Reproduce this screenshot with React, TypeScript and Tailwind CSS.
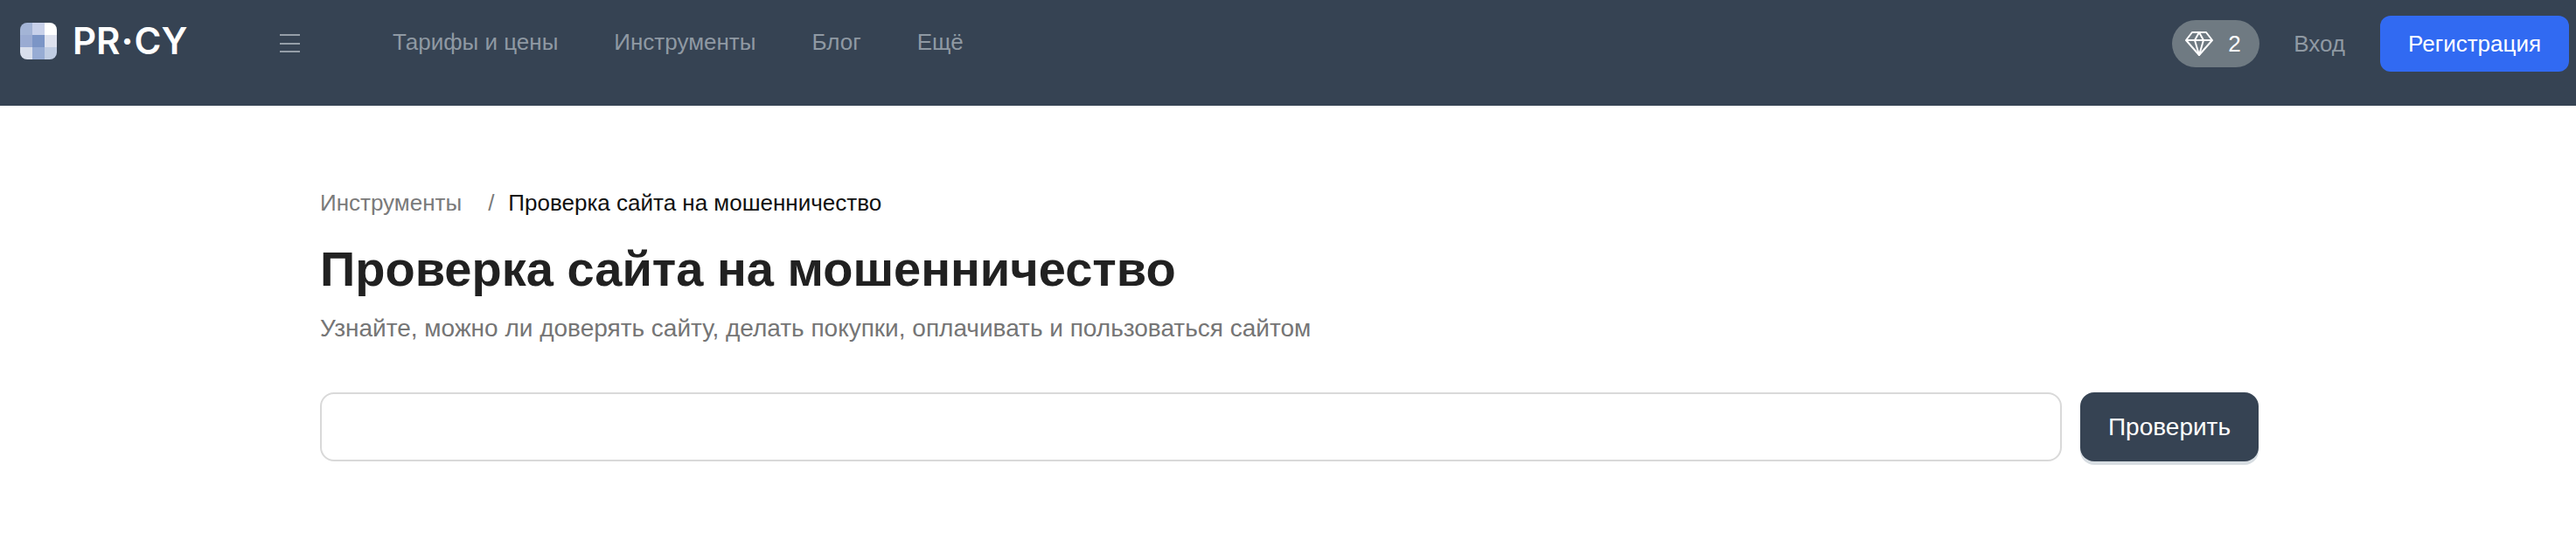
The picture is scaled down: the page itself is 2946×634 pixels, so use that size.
import React from 'react';

const NAV = ['Тарифы и цены', 'Инструменты', 'Блог', 'Ещё'];

// 3x3 logo tiles, left to right and top to bottom
const LOGO_TILES = ['#a3b4d6', '#c8d1ea', '#ffffff', '#9aabd2', '#7b95c6', '#dde1ee', '#d9dfec', '#97acd4', '#c0cde3'];

const Logo: React.FC = () => (
  <div className="grid h-[42px] w-[42px] grid-cols-3 grid-rows-3 overflow-hidden rounded-[8px]">
    {LOGO_TILES.map((color, i) => (
      <div key={i} style={{ backgroundColor: color }} />
    ))}
  </div>
);

const Diamond: React.FC = () => (
  <svg width="34" height="30" viewBox="0 0 34 30" fill="none" stroke="#ffffff" strokeWidth="2" strokeLinejoin="round">
    <path d="M9 2h16l7 9-15 17L2 11z" />
    <path d="M2 11h30M12 11l5 17 5-17M12 11l5-9 5 9" />
  </svg>
);

const App: React.FC = () => {
  return (
    <div className="min-h-[634px] bg-white font-['Liberation_Sans',Arial,sans-serif]">
      <header className="flex h-[121px] items-start bg-[#364353]">
        <div className="flex items-center pl-[23px] pt-[26px]">
          <Logo />
          <span className="ml-[18px] w-[134px] whitespace-nowrap font-['Inter',sans-serif] text-[42px] leading-[42px] font-semibold text-white">
            PR<span className="mx-[1px] font-bold">·</span>CY
          </span>
        </div>
        <div className="ml-[103px] mt-[39px] flex h-[21px] w-[23px] flex-col justify-between">
          <span className="h-[2px] bg-[#959ea8]" />
          <span className="h-[2px] bg-[#959ea8]" />
          <span className="h-[2px] bg-[#959ea8]" />
        </div>
        <nav className="ml-[106px] flex gap-[64px] pt-[33px] text-[26px] leading-[30px] text-[#8f99a3]">
          {NAV.map((item) => (
            <a key={item}>{item}</a>
          ))}
        </nav>
        <div className="ml-auto flex items-center pr-[8px] pt-[18px]">
          <div className="flex h-[54px] w-[100px] items-center gap-[16px] rounded-full bg-[#6f7a82] pl-[14px] text-[26px] text-white">
            <Diamond />
            <span>2</span>
          </div>
          <a className="ml-[39px] text-[26px] text-[#8f99a3]">Вход</a>
          <button className="ml-[40px] h-[64px] w-[216px] rounded-[12px] bg-[#316af2] text-[26px] text-white">Регистрация</button>
        </div>
      </header>
      <main className="ml-[366px] w-[2217px] pt-[94px]">
        <div className="flex text-[26px] leading-[34px]">
          <a className="text-[#7a7a7a]">Инструменты</a>
          <span className="ml-[30px] mr-[16px] text-[#7a7a7a]">/</span>
          <span className="text-[#111111]">Проверка сайта на мошенничество</span>
        </div>
        <h1 className="mt-[27px] text-[56px] leading-[64px] font-bold text-[#212121]">Проверка сайта на мошенничество</h1>
        <p className="mt-[18px] text-[28px] leading-[36px] text-[#757575]">Узнайте, можно ли доверять сайту, делать покупки, оплачивать и пользоваться сайтом</p>
        <div className="mt-[55px] flex gap-[21px]">
          <input className="h-[79px] min-w-0 flex-1 rounded-[16px] border-2 border-[#d9d9d9] bg-white px-4 text-[26px] outline-none" />
          <button className="h-[79px] w-[204px] rounded-[16px] bg-[#364353] text-[28px] text-white shadow-[0_4px_0_#d7dde2]">Проверить</button>
        </div>
      </main>
    </div>
  );
};

export default App;
